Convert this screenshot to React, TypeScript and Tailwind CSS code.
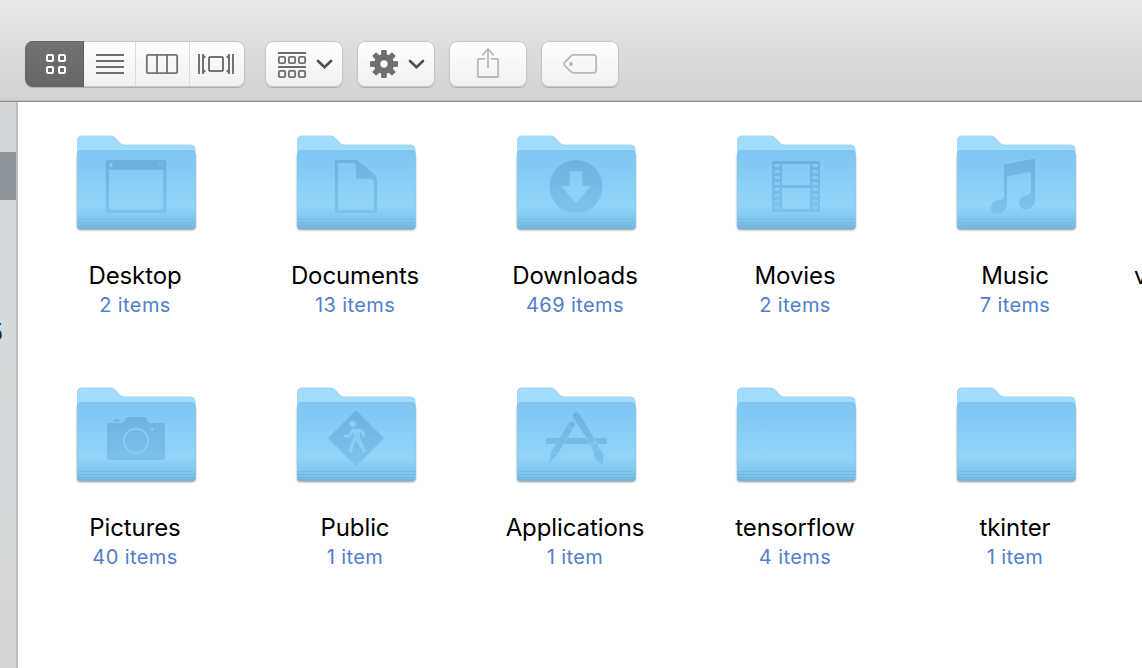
import React from "react";

type Kind =
  | "desktop" | "documents" | "downloads" | "movies" | "music"
  | "pictures" | "public" | "applications" | "plain";

type Item = { name: string; count: string; kind: Kind };

const rows: Item[][] = [
  [
    { name: "Desktop", count: "2 items", kind: "desktop" },
    { name: "Documents", count: "13 items", kind: "documents" },
    { name: "Downloads", count: "469 items", kind: "downloads" },
    { name: "Movies", count: "2 items", kind: "movies" },
    { name: "Music", count: "7 items", kind: "music" },
  ],
  [
    { name: "Pictures", count: "40 items", kind: "pictures" },
    { name: "Public", count: "1 item", kind: "public" },
    { name: "Applications", count: "1 item", kind: "applications" },
    { name: "tensorflow", count: "4 items", kind: "plain" },
    { name: "tkinter", count: "1 item", kind: "plain" },
  ],
];

const G = "url(#glyph)";
const sprockets = [0, 1, 2, 3, 4, 5, 6, 7];

function Glyph({ kind }: { kind: Kind }) {
  switch (kind) {
    case "desktop":
      return (
        <g>
          <path fill={G} fillRule="evenodd" d="M142 120H314Q319 120 319 125V273Q319 279 313 279H143Q137 279 137 273V125Q137 120 142 120ZM147 149V265Q147 270 152 270H305Q310 270 310 265V149Z" />
          <path fill="#69afdd" d="M139 122H317V148H139Z" />
          <path fill="#8ac6ee" d="M152 129c2-3 3-3 3-3c0 2-1 3-2 4c3-1 5 0 6 2c-2 2-2 4 0 6c-2 4-4 4-6 3c-3 1-5 0-6-4c-1-5 2-8 5-7z" />
          <circle cx="301" cy="132" r="5.5" fill="none" stroke="#82bde7" strokeWidth="2.5" />
          <path d="M305 136L310 141" stroke="#82bde7" strokeWidth="3" />
        </g>
      );
    case "documents":
      return <path fill={G} fillRule="evenodd" d="M165 120H230L278 158Q291 169 291 184V279H165ZM174 129V270H282V187Q281 177 270 176H228V139Q227 129 217 129Z" />;
    case "downloads":
      return <path fill={G} fillRule="evenodd" d="M228 120A79.500 79.500 0 0 1 228 279A79.500 79.500 0 0 1 228 120ZM209 154V198H183L228 250L273 198H247V154Z" />;
    case "movies":
      return (
        <g>
          <path fill={G} fillRule="evenodd" d="M156 123H300V276H156ZM186 132V195H270V132ZM186 204V267H270V204Z" />
          {sprockets.map((n) => (
            <g key={n} fill="#86cbf4">
              <rect x="163" y={132 + n * 17.9} width="17" height="9.500" rx="3.500" />
              <rect x="277" y={132 + n * 17.9} width="17" height="9.500" rx="3.500" />
            </g>
          ))}
        </g>
      );
    case "music":
      return <path fill={G} d="M192 139Q191 135 196 133L279 117Q285 116 285 122V240C285 257 272 267 256 267C242 267 236 257 238 245C240 232 252 226 264 225C271 224 273 221 273 214V161Q273 155 267 156L206 168Q201 169 201 174V250C201 270 188 282 171 282C158 282 151 272 153 261C155 247 167 241 180 240C189 239 192 236 192 228Z" />;
    case "pictures":
      return (
        <g>
          <path fill={G} d="M150 153H186Q192 151 196 142Q199 135 206 135H251Q258 135 261 142Q265 153 272 153H306Q315 153 315 162V255Q315 264 306 264H150Q141 264 141 255V162Q141 153 150 153Z" />
          <rect x="160" y="141" width="18" height="9" rx="3" fill={G} />
          <circle cx="228" cy="207" r="36.500" fill="none" stroke="#8acdf5" strokeWidth="5" />
          <circle cx="277" cy="172" r="4.500" fill="#8acdf5" />
        </g>
      );
    case "public":
      return (
        <g>
          <path d="M225 118Q228 115 231 118L309 196Q312 199 309 202L231 280Q228 283 225 280L147 202Q144 199 147 196Z" fill={G} />
          <circle cx="218" cy="156" r="10" fill="#8bcdf4" />
          <path d="M218 170H237Q247 171 252 178L255 184V192Q251 197 246 193V185L240 181V200L248 213L258 237Q257 244 250 242L236 218L227 207L221 220L216 241Q209 246 206 238L211 216L220 199V181L211 196H193Q188 192 193 188H206L212 174Z" fill="#8bcdf4" />
        </g>
      );
    case "applications":
      return (
        <g>
          <rect x="138" y="198" width="182" height="18" fill={G} />
          <g stroke="#8bcdf5" strokeWidth="2">
            <path fill={G} d="M207 151Q213 143 222 148Q229 153 224 162L171 250L145 278L153 239Z" />
            <path fill={G} d="M219 139Q214 126 224 120Q234 117 240 126L291 212L275 222Z" />
            <path fill={G} d="M274 223L292 213L299 231C312 242 313 257 308 279C294 272 281 263 282 244Z" />
          </g>
          <path d="M200 161L217 171M155 238L174 249M271 217L289 207M283 236L300 227" fill="none" stroke="#8bcdf5" strokeWidth="3" />
        </g>
      );
    default:
      return null;
  }
}

function Folder({ kind }: { kind: Kind }) {
  return (
    <svg className="block h-[115px] w-[150px]" viewBox="0 0 450 345">
      <path d="M52 104H406V321Q406 329 398 329H60Q52 329 52 321Z" fill="#000" opacity="0.5" filter="url(#soft)" />
      <path d="M51 62Q51 47 66 47H153Q161 47 167 54L180 68Q185 74 193 74H391Q407 74 407 91V316H51Z" fill="#a3dcfb" />
      <path d="M53 61Q54 48 66 48H153Q161 48 166 54L179 68Q184 75 193 75H391Q402 75 405 84" fill="none" stroke="#98d5f6" strokeWidth="2" />
      <path d="M51 104Q51 91 64 91H394Q407 91 407 104V318Q407 326 399 326H59Q51 326 51 318Z" fill="url(#front)" />
      <path d="M53 104Q53 92 64 92H394Q405 92 405 104" fill="none" stroke="#7bc1ee" strokeWidth="2" />
      <path d="M52.500 104V318M405.500 104V318" stroke="#84c8ef" strokeWidth="2" />
      <g strokeWidth="3">
        <path d="M52 295.500H406" stroke="#86c9ef" />
        <path d="M52 298.500H406" stroke="#75bbe5" />
        <path d="M52 304.500H406" stroke="#83c6ec" />
        <path d="M52 307.500H406" stroke="#73b9e3" />
        <path d="M52 313.500H406" stroke="#80c3e9" />
        <path d="M52 316.500H406" stroke="#71b6e0" />
        <path d="M56 323.500H402" stroke="#6fb3db" />
      </g>
      <g opacity="0.86">
        <Glyph kind={kind} />
      </g>
    </svg>
  );
}

function FolderItem({ item }: { item: Item }) {
  return (
    <div className="flex h-[252px] w-[220px] shrink-0 flex-col items-center">
      <Folder kind={item.kind} />
      <div className="mt-[25px] h-8 text-[24px] leading-8 tracking-[-0.1px] whitespace-nowrap text-black">{item.name}</div>
      <div className="-mt-px h-7 text-[20px] leading-7 tracking-[0.4px] whitespace-nowrap text-[#5080cb]">{item.count}</div>
    </div>
  );
}

const buttonClass =
  "h-[46px] w-[78px] overflow-hidden rounded-[8px] bg-linear-to-b from-white to-[#f0f0f0] shadow-[inset_0_0_0_1px_#c6c6c6,0_1px_1px_#aaa]";

function Chevron({ x }: { x: number }) {
  return <path d={`M${x} 93L${x + 19.5} 111.5L${x + 39} 93`} fill="none" stroke="#505050" strokeWidth="8" strokeLinecap="round" strokeLinejoin="miter" />;
}

function Toolbar() {
  return (
    <header className="flex h-[102px] shrink-0 items-start border-b border-[#8d8b8d] bg-linear-to-b from-[#e9e8e9] to-[#d3d2d3] pt-[41px] pl-[25px] shadow-[inset_0_-1px_0_#bdbbbd]">
      <div className="mr-5 flex h-[46px] w-[220px] overflow-hidden rounded-[8px] bg-linear-to-b from-white to-[#f0f0f0] shadow-[inset_0_0_0_1px_#c4c4c4,0_1px_1px_#aaa]">
        <div className="h-[46px] w-[59px] bg-linear-to-b from-[#727272] to-[#666] shadow-[inset_-1px_0_0_#5d5d5d,inset_0_1px_0_#666]">
          <svg className="block h-[46px] w-[59px]" viewBox="45 33 177 138" fill="none" stroke="#fff" strokeWidth="6">
            <rect x="111" y="75" width="18" height="18" rx="3" />
            <rect x="147" y="75" width="18" height="18" rx="3" />
            <rect x="111" y="111" width="18" height="18" rx="3" />
            <rect x="147" y="111" width="18" height="18" rx="3" />
          </svg>
        </div>
        <svg className="block h-[46px] w-[51px] shrink-0" viewBox="222 33 153 138">
          <path d="M258 75H342M258 93H342M258 111H342M258 129H342" stroke="#6e6e6e" strokeWidth="6" />
        </svg>
        <svg className="block h-[46px] w-[54px] shrink-0" viewBox="375 33 162 138">
          <rect x="410.500" y="74.500" width="91" height="55" rx="4" fill="none" stroke="#737373" strokeWidth="5.500" />
          <path d="M441 74V130M471 74V130" stroke="#737373" strokeWidth="5.500" />
          <path d="M375 36V168" stroke="#dadada" strokeWidth="6" />
        </svg>
        <svg className="block h-[46px] w-[56px] shrink-0" viewBox="537 33 168 138">
          <rect x="597" y="81" width="42" height="42" rx="4" fill="none" stroke="#737373" strokeWidth="6" />
          <path d="M567 72V132M669 72V132" stroke="#737373" strokeWidth="6" />
          <path d="M579 72V132M657 72V132" stroke="#737373" strokeWidth="6" />
          <path d="M582 75L588 81L582 86M582 118L588 123L582 129M654 75L648 81L654 86M654 118L648 123L654 129" fill="#737373" />
          <path d="M537 36V168" stroke="#dadada" strokeWidth="6" />
        </svg>
      </div>
      <div className="flex gap-[14px]">
        <div className={buttonClass}>
          <svg className="block h-[46px] w-[78px]" viewBox="45 33 234 138">
            <path d="M84 69H168M84 111H168" stroke="#6c6c6c" strokeWidth="6" />
            <g fill="none" stroke="#6f6f6f" strokeWidth="5.500">
              {[86.5, 116.5, 146.5].map((x) => (
                <g key={x}>
                  <rect x={x} y="80.500" width="19" height="19" rx="4" />
                  <rect x={x} y="122.500" width="19" height="19" rx="4" />
                </g>
              ))}
            </g>
            <Chevron x={204} />
          </svg>
        </div>
        <div className={buttonClass}>
          <svg className="block h-[46px] w-[78px]" viewBox="321 33 234 138">
            <g fill="#6f6f6f">
              {[0, 45, 90, 135, 180, 225, 270, 315].map((a) => (
                <path key={a} transform={`rotate(${a} 402 102)`} d="M394 60H410L411 78H393Z" />
              ))}
            </g>
            <circle cx="402" cy="102" r="20.500" fill="none" stroke="#6f6f6f" strokeWidth="19" />
            <Chevron x={480} />
          </svg>
        </div>
        <div className={buttonClass}>
          <svg className="block h-[46px] w-[78px]" viewBox="27 33 234 138" fill="none" stroke="#b9b9b9" strokeWidth="5.500">
            <path d="M135 86.500H116Q113.500 86.500 113.500 90V138Q113.500 141 117 141H171Q174.500 141 174.500 138V90Q174.500 86.500 171 86.500H153" />
            <path d="M144 114V57M127 76L144 57L161 76" />
          </svg>
        </div>
        <div className={buttonClass}>
          <svg className="block h-[46px] w-[78px]" viewBox="303 33 234 138">
            <path d="M402 74.500H460Q468.500 74.500 468.500 83V120Q468.500 128.500 460 128.500H402Q397 128.500 393 125L374 107Q370 102 374 97L393 78Q397 74.500 402 74.500Z" fill="none" stroke="#b9b9b9" strokeWidth="5.500" />
            <circle cx="393" cy="102" r="6" fill="#b9b9b9" />
          </svg>
        </div>
      </div>
    </header>
  );
}

export default function App() {
  return (
    <div className="flex h-[668px] w-[1142px] flex-col overflow-hidden bg-white font-['Inter',sans-serif]">
      <svg className="absolute h-0 w-0" aria-hidden="true">
        <defs>
          <linearGradient id="front" gradientUnits="userSpaceOnUse" x1="0" y1="91" x2="0" y2="326">
            <stop offset="0" stopColor="#80c6f1" />
            <stop offset="0.2" stopColor="#82caf4" />
            <stop offset="0.4" stopColor="#89cff8" />
            <stop offset="0.7" stopColor="#91d5f7" />
            <stop offset="0.83" stopColor="#86cbf1" />
            <stop offset="1" stopColor="#74bae3" />
          </linearGradient>
          <linearGradient id="glyph" gradientUnits="userSpaceOnUse" x1="0" y1="118" x2="0" y2="280">
            <stop offset="0" stopColor="#67aedd" />
            <stop offset="0.5" stopColor="#70b7e4" />
            <stop offset="1" stopColor="#79c1ea" />
          </linearGradient>
          <filter id="soft" x="-10%" y="-10%" width="120%" height="120%">
            <feGaussianBlur stdDeviation="3" />
          </filter>
        </defs>
      </svg>
      <Toolbar />
      <div className="flex min-h-0 flex-1">
        <aside className="flex w-[18px] shrink-0 flex-col overflow-hidden border-r-2 border-[#bcbfc0] bg-linear-to-b from-[#d2d7da] via-[#d6dadb] to-[#d5d6d8]">
          <div className="mt-[50px] h-12 shrink-0 bg-linear-to-b from-[#8d9698] via-[#8b959c] to-[#8e9796]" />
          <div className="mt-[117px] flex h-8 w-[3px] shrink-0 justify-end text-[24px] leading-8 text-[#202a3c]">5</div>
        </aside>
        <main className="min-w-0 flex-1 overflow-hidden pt-[18px] pl-[7px]">
          {rows.map((row, r) => (
            <div key={r} className="flex">
              {row.map((item) => (
                <FolderItem key={item.name} item={item} />
              ))}
              {r === 0 && <div className="shrink-0 pt-[140px] pl-[9px] text-[24px] leading-8 text-black">v</div>}
            </div>
          ))}
        </main>
      </div>
    </div>
  );
}
